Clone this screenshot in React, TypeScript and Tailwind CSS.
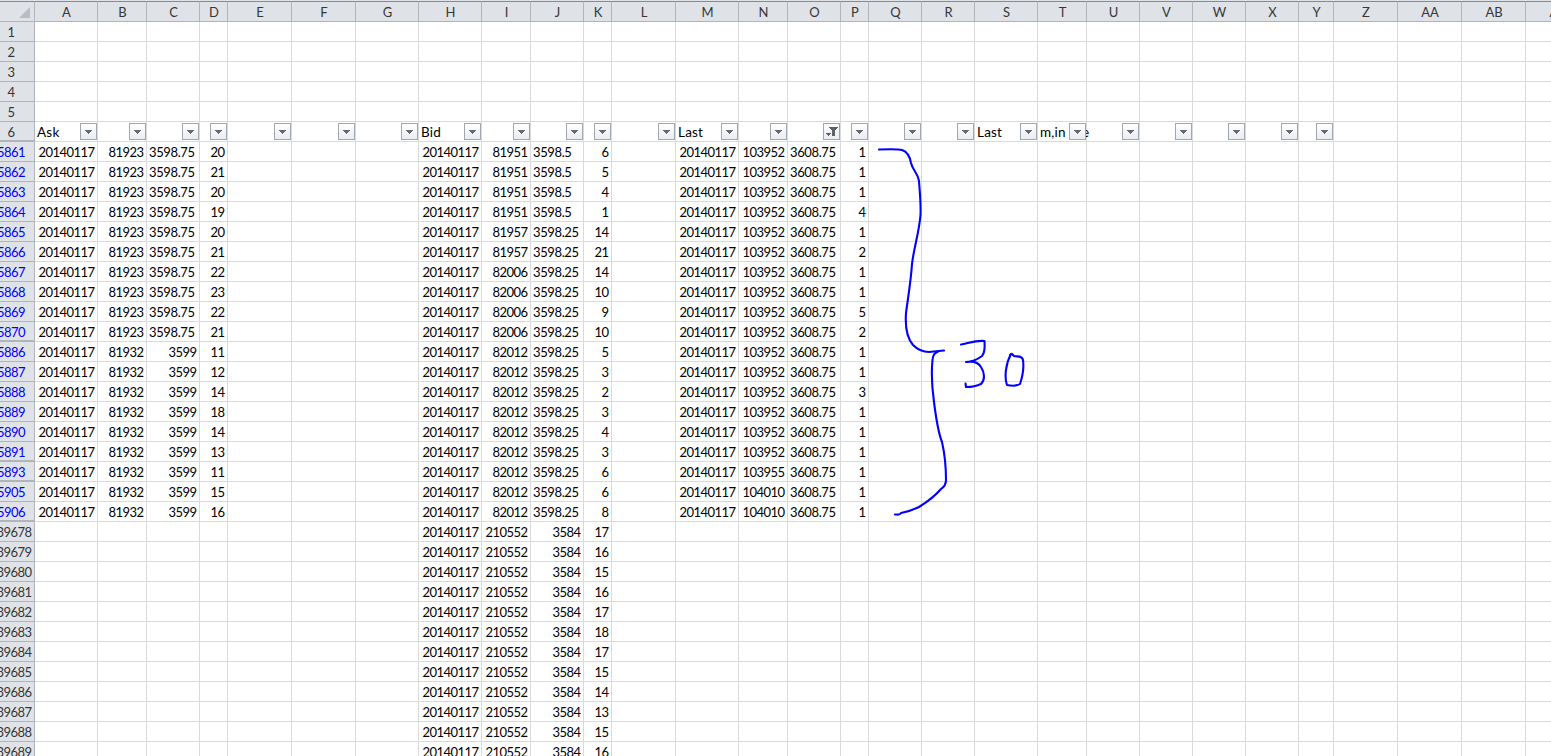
import { Fragment } from "react";

type Row = { label: string; hidden?: boolean; cells: Record<string, string> };

const columns: { name: string; width: number }[] = [
  { name: "A", width: 63 },
  { name: "B", width: 49 },
  { name: "C", width: 53 },
  { name: "D", width: 28 },
  { name: "E", width: 64 },
  { name: "F", width: 64 },
  { name: "G", width: 63 },
  { name: "H", width: 63 },
  { name: "I", width: 49 },
  { name: "J", width: 53 },
  { name: "K", width: 28 },
  { name: "L", width: 64 },
  { name: "M", width: 63 },
  { name: "N", width: 49 },
  { name: "O", width: 53 },
  { name: "P", width: 28 },
  { name: "Q", width: 53 },
  { name: "R", width: 53 },
  { name: "S", width: 63 },
  { name: "T", width: 49 },
  { name: "U", width: 53 },
  { name: "V", width: 53 },
  { name: "W", width: 53 },
  { name: "X", width: 53 },
  { name: "Y", width: 35 },
  { name: "Z", width: 64 },
  { name: "AA", width: 64 },
  { name: "AB", width: 64 },
  { name: "AC", width: 64 },
];

const FILTER_COUNT = 25;

const filterLabels: Record<string, string> = { A: "Ask", H: "Bid", M: "Last", S: "Last", T: "m,in" };

// row, ask time, ask price, ask size, bid time, bid price, bid size, last time, last size
const trades = [
  ["5861", "81923", "3598.75", "20", "81951", "3598.5", "6", "103952", "1"],
  ["5862", "81923", "3598.75", "21", "81951", "3598.5", "5", "103952", "1"],
  ["5863", "81923", "3598.75", "20", "81951", "3598.5", "4", "103952", "1"],
  ["5864", "81923", "3598.75", "19", "81951", "3598.5", "1", "103952", "4"],
  ["5865", "81923", "3598.75", "20", "81957", "3598.25", "14", "103952", "1"],
  ["5866", "81923", "3598.75", "21", "81957", "3598.25", "21", "103952", "2"],
  ["5867", "81923", "3598.75", "22", "82006", "3598.25", "14", "103952", "1"],
  ["5868", "81923", "3598.75", "23", "82006", "3598.25", "10", "103952", "1"],
  ["5869", "81923", "3598.75", "22", "82006", "3598.25", "9", "103952", "5"],
  ["5870", "81923", "3598.75", "21", "82006", "3598.25", "10", "103952", "2"],
  ["5886", "81932", "3599", "11", "82012", "3598.25", "5", "103952", "1"],
  ["5887", "81932", "3599", "12", "82012", "3598.25", "3", "103952", "1"],
  ["5888", "81932", "3599", "14", "82012", "3598.25", "2", "103952", "3"],
  ["5889", "81932", "3599", "18", "82012", "3598.25", "3", "103952", "1"],
  ["5890", "81932", "3599", "14", "82012", "3598.25", "4", "103952", "1"],
  ["5891", "81932", "3599", "13", "82012", "3598.25", "3", "103952", "1"],
  ["5893", "81932", "3599", "11", "82012", "3598.25", "6", "103955", "1"],
  ["5905", "81932", "3599", "15", "82012", "3598.25", "6", "104010", "1"],
  ["5906", "81932", "3599", "16", "82012", "3598.25", "8", "104010", "1"],
];

// rows followed by filtered-out rows get a heavier line in the row header
const gapAfter = ["5870", "5891", "5893", "5906"];

const filteredRows: Row[] = trades.map(([label, b, c, d, i, j, k, n, p]) => ({
  label,
  hidden: gapAfter.includes(label),
  cells: { A: "20140117", B: b, C: c, D: d, H: "20140117", I: i, J: j, K: k, M: "20140117", N: n, O: "3608.75", P: p },
}));

const tailSizes = ["17", "16", "15", "16", "17", "18", "17", "15", "14", "13", "15", "16"];

const tailRows: Row[] = tailSizes.map((size, i) => ({
  label: String(39678 + i),
  cells: { H: "20140117", I: "210552", J: "3584", K: size },
}));

const FilterButton = ({ active }: { active?: boolean }) => (
  <span className="absolute top-px right-0 z-10 h-[17px] w-[17px] border border-[#a0a7b0] bg-linear-to-b from-white to-[#e9ecf1]">
    <svg width="15" height="15" viewBox="0 0 15 15" className="block" shapeRendering="crispEdges">
      {active ? (
        <>
          <path d="M5 3h9v1h-1v1h-1v1h-1v6h-3v-6h-1v-1h-1v-1h-1z" fill="#5f6266" />
          <path d="M2 9h5v1h-1v1h-1v1h-1v-1h-1v-1h-1z" fill="#5f6266" />
        </>
      ) : (
        <path d="M4 6h7v1h-1v1h-1v1h-1v1h-1v-1h-1v-1h-1v-1h-1z" fill="#66696e" />
      )}
    </svg>
  </span>
);

const HeaderRow = () => (
  <div className="flex h-[22px] border-b border-[#b1b5ba] bg-[#dfe3e8] text-[#363636]">
    <div className="mt-px flex w-[35px] shrink-0 items-start justify-end border-t border-r border-t-[#868b92] border-r-[#b1b5ba] pt-[5px] pr-1">
      <svg width="11" height="11" viewBox="0 0 11 11">
        <path d="M11 0v11H0z" fill="#b9bcc1" />
      </svg>
    </div>
    {columns.map((col) => (
      <div
        key={col.name}
        style={{ width: col.width }}
        className="mt-px shrink-0 border-t border-r border-t-[#868b92] border-r-[#b1b5ba] pl-px text-center leading-[21px] tracking-normal"
      >
        {col.name}
      </div>
    ))}
  </div>
);

const RowHeader = ({ label, blue, gap }: { label: string; blue?: boolean; gap?: boolean }) => (
  <div
    className={`flex w-[35px] shrink-0 overflow-hidden border-r border-[#b1b5ba] bg-[#dfe3e8] leading-[21px] ${
      gap ? "border-b-2" : "border-b"
    } ${blue ? "text-[#0000ff]" : "text-[#363636]"}`}
  >
    <span className={label.length === 5 ? "-ml-[3.5px]" : "-ml-3 w-[46px] text-center"}>{label}</span>
  </div>
);

const App = () => {
  return (
    <div className="relative h-[756px] w-[1551px] overflow-hidden bg-white font-['Lato','Liberation_Sans',sans-serif] text-[13px] tracking-[-0.54px] text-black">
      <HeaderRow />

      {["1", "2", "3", "4", "5"].map((n) => (
        <div key={n} className="flex h-5">
          <RowHeader label={n} />
          {columns.map((col) => (
            <div key={col.name} style={{ width: col.width }} className="shrink-0 border-r border-b border-[#d9dadb]" />
          ))}
        </div>
      ))}

      {/* Filter row */}
      <div className="flex h-5">
        <RowHeader label="6" gap />
        {columns.map((col, i) => (
          <div
            key={col.name}
            style={{ width: col.width }}
            className="relative shrink-0 border-r border-b border-[#d9dadb] pl-[2px] text-[13.5px] leading-[21px] tracking-[0.2px] whitespace-nowrap"
          >
            {filterLabels[col.name]}
            {col.name === "T" && <span className="absolute left-[44px]">e</span>}
            {i < FILTER_COUNT && <FilterButton active={col.name === "O"} />}
          </div>
        ))}
      </div>

      {[...filteredRows, ...tailRows].map((row) => (
        <Fragment key={row.label}>
          <div className="flex h-5">
            <RowHeader label={row.label} blue={row.label.length === 4} gap={row.hidden} />
            {columns.map((col) => {
              const value = row.cells[col.name] ?? "";
              return (
                <div
                  key={col.name}
                  style={{ width: col.width }}
                  className={`shrink-0 border-r border-b border-[#d9dadb] pr-[2.5px] pl-[2px] leading-[21px] ${
                    value.includes(".") ? "text-left tracking-[-0.38px]" : "text-right"
                  }`}
                >
                  {value}
                </div>
              );
            })}
          </div>
        </Fragment>
      ))}

      {/* Pen marks */}
      <svg
        className="absolute top-0 left-0"
        width="1551"
        height="756"
        viewBox="0 0 1551 756"
        fill="none"
        stroke="#0000ff"
        strokeWidth="2.1"
        strokeLinecap="round"
        strokeLinejoin="round"
      >
        <path d="M879 149.500C890 149 898 149 902 150C908 152 910 157 911 163C913 171 918 173 919 181C920 195 921 204 920.500 215C919 233 914 247 912 264C911 280 908 298 906 313C905 327 907 338 913 345C918 350 923 352 929 352L944 350.500" />
        <path d="M938 351.500C935 353 933 354 932.500 360C931 375 932 388 934 402C936 418 938 432 942 442C945 455 946 466 946 480C946 485 944 487 941 489C935 496 927 502 919 507C913 510 906 512 901 513C899 516 897 514 895 514.500" />
        <path d="M961 344.500C969 343 977 340 984.500 341C985 348 985 353 982 356C978 359 972 362 966 362C972 361 978 362 981 367C985 373 985 380 981 384C977 386 972 387 966 387L965.500 383.500" />
        <path d="M1011 354C1006 363 1004 377 1007 385C1012 386 1017 386 1020 384C1023 375 1024 367 1023 360C1022 355 1017 357 1014 356C1012 354 1012 353 1010 355" />
      </svg>
    </div>
  );
};

export default App;
